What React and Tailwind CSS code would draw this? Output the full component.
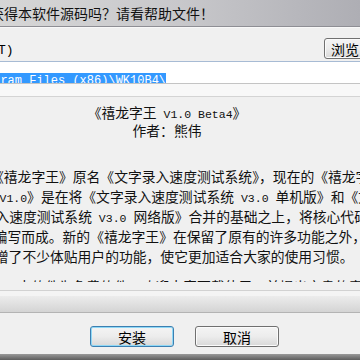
import React from 'react';

const cjk = { fontFamily: '"Noto Sans CJK SC", "Liberation Sans", sans-serif' };

// latin runs in the dialog use a half-width mono face
function L({ children }) {
  return <span className="font-['Liberation_Mono',monospace] text-[11.5px]">{children}</span>;
}

function Button({ children, focused }) {
  return (
    <div
      className={
        'w-[84px] h-[21px] flex items-center justify-center rounded-[3px] border text-[14px] leading-none text-black bg-linear-to-b from-[#f4f4f4] via-[#ececec] to-[#d8d8d8] ' +
        (focused
          ? 'border-[#3c7fb1] shadow-[inset_0_0_0_1px_#8fd8f6]'
          : 'border-[#707070] shadow-[inset_0_0_0_1px_#fbfbfb]')
      }
    >
      {children}
    </div>
  );
}

export default function App() {
  return (
    <div className="w-[360px] h-[360px] overflow-hidden flex flex-col bg-[#f0f0f0] text-black" style={cjk}>
      {/* title bar */}
      <div className="h-[27px] shrink-0 flex items-center overflow-hidden whitespace-nowrap bg-linear-to-r from-[#d6d6d6] via-[#c8c8cb] to-[#aeaeb4] border-b border-[#8e8e94]">
        <span className="ml-[-10px] text-[14px] leading-none text-[#111]">获得本软件源码吗？请看帮助文件！</span>
      </div>

      {/* path label + browse */}
      <div className="h-[34px] shrink-0 flex items-start justify-between pt-[10px] border-t border-[#f8f8f8]">
        <span className="ml-[-2px] mt-[6px] text-[13px] leading-none font-['Liberation_Mono',monospace]">T)</span>
        <div className="w-[44px] h-[21px] mr-[-8px] flex items-center pl-[6px] rounded-[3px] border border-[#707070] text-[14px] leading-none bg-linear-to-b from-[#f4f4f4] via-[#ececec] to-[#d8d8d8] shadow-[inset_0_0_0_1px_#fbfbfb]">
          浏览
        </div>
      </div>

      {/* path input */}
      <div className="h-[23px] shrink-0 bg-white border-t border-[#a7bbd4] border-b border-b-[#c4c4c4] pt-[3px] overflow-hidden whitespace-nowrap">
        <span className="inline-block h-[16px] leading-[16px] ml-[-50px] bg-[#3399ff] text-white font-['Liberation_Mono',monospace] text-[12px]">
          C:\Program Files (x86)\WK10B4\
        </span>
      </div>
      <div className="h-[13px] shrink-0 bg-[#f8f8f8] border-b border-[#d4d4d4]" />

      {/* readme text */}
      <div className="h-[193px] shrink-0 overflow-hidden whitespace-nowrap text-[13.8px] leading-[20px] pt-[6px] text-[#111]">
        <div className="h-[18px] pr-[26px] text-center leading-[18px]">
          《禧龙字王<L> V1.0 Beta4</L>》
        </div>
        <div className="h-[18px] pr-[26px] text-center leading-[18px]">作者：熊伟</div>
        <div className="h-[20px] mt-[27px] ml-[-10px]">《禧龙字王》原名《文字录入速度测试系统》，现在的《禧龙字王</div>
        <div className="h-[20px] ml-[-35px]">
          字王<L> V1.0</L>》是在将《文字录入速度测试系统<L> V3.0 </L>单机版》和《文字录
        </div>
        <div className="h-[20px] ml-[-46px]">
          文字录入速度测试系统<L> V3.0 </L>网络版》合并的基础之上，将核心代码重新
        </div>
        <div className="h-[20px] ml-[-34px]">重新编写而成。新的《禧龙字王》在保留了原有的许多功能之外，新</div>
        <div className="h-[20px] ml-[-19px]">新增了不少体贴用户的功能，使它更加适合大家的使用习惯。</div>
        <div className="mt-[13px] h-[3px] overflow-hidden ml-[-10px]">
          <div className="h-[14px] leading-[14px]">　　本软件为免费软件，欢迎大家下载使用，并提出宝贵的意见。</div>
        </div>
      </div>

      {/* separator */}
      <div className="h-[6px] shrink-0 border-t border-[#d2d2d2] bg-[#f4f4f4]" />
      <div className="h-[17px] shrink-0 bg-linear-to-b from-[#ececec] to-[#d4d4d4] border-b border-[#b4b4b4]" />

      {/* buttons */}
      <div className="h-[41px] shrink-0 flex items-start pt-[13px] pl-[90px] gap-[21px]">
        <Button focused>安装</Button>
        <Button>取消</Button>
      </div>
      <div className="flex-1 bg-linear-to-b from-[#9a9a9a] to-[#5e5e5e]" />
    </div>
  );
}
